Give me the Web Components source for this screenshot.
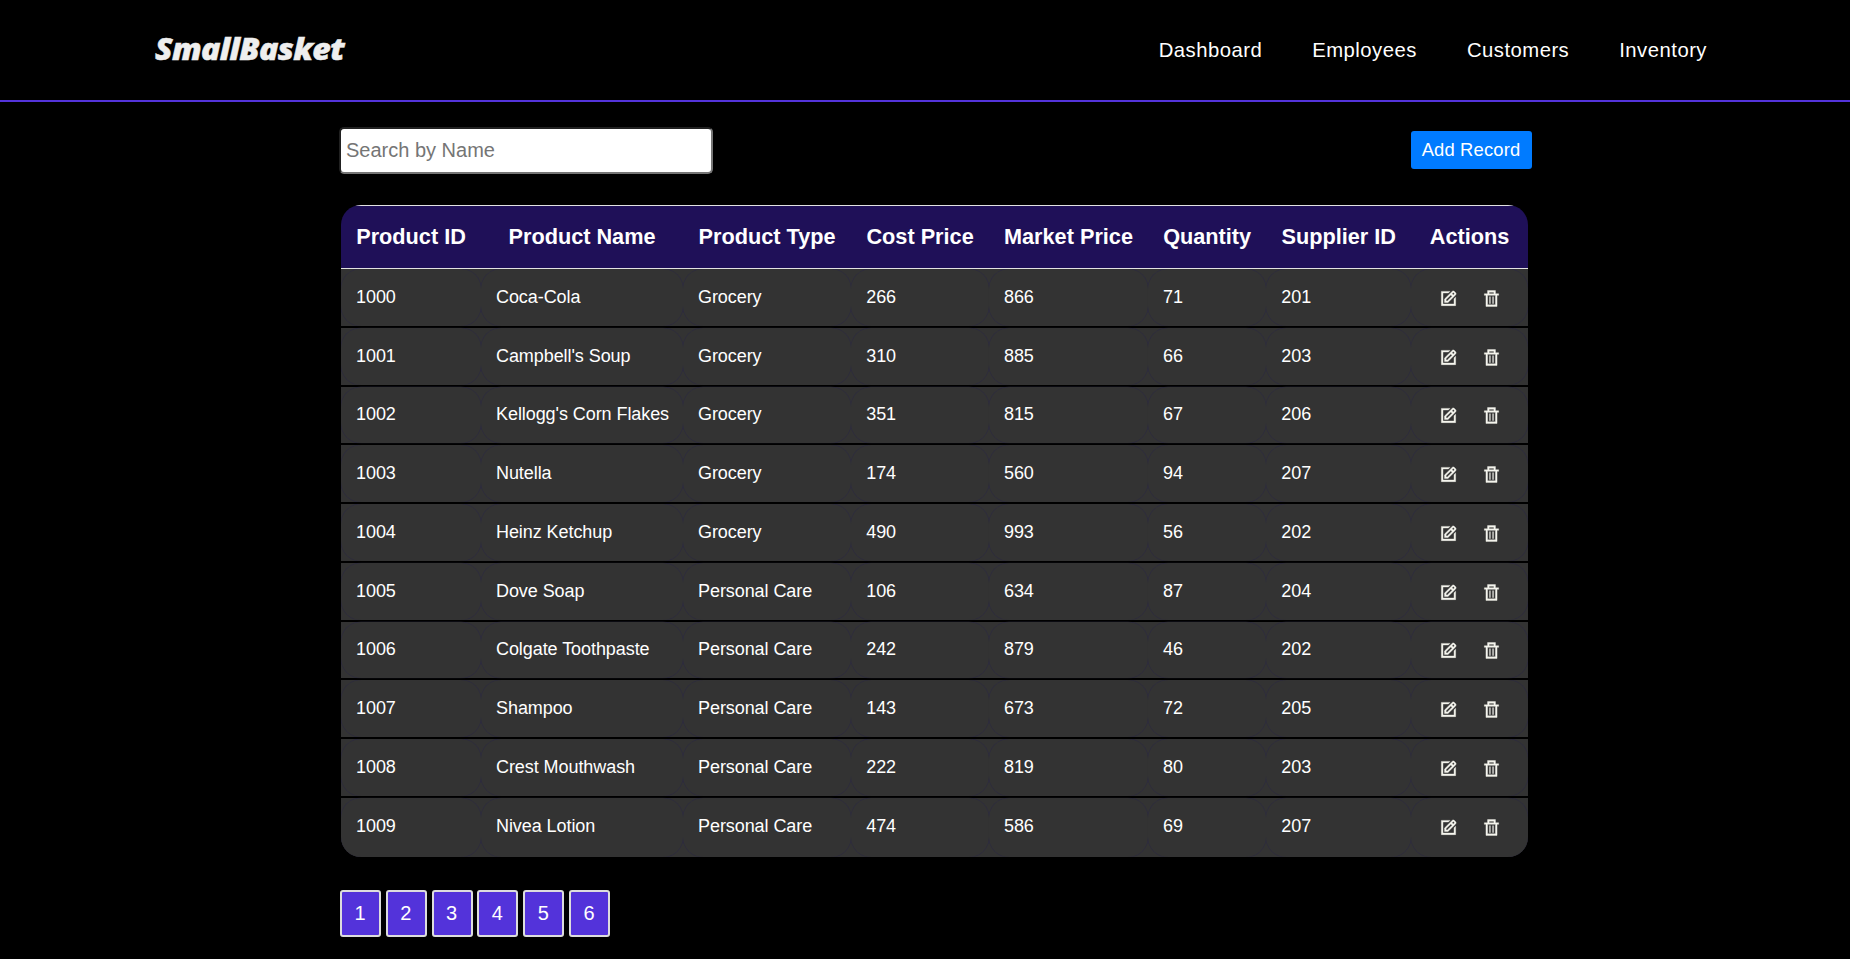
<!DOCTYPE html>
<html lang="en">
<head>
<meta charset="utf-8">
<title>SmallBasket</title>
<style>
html, body { margin: 0; background: #000; color: #fff; font-family: "Liberation Sans", Arial, sans-serif; }
body { height: 959px; overflow: hidden; }
</style>
</head>
<body>
<app-header>
  <nav-link>Dashboard</nav-link>
  <nav-link>Employees</nav-link>
  <nav-link>Customers</nav-link>
  <nav-link>Inventory</nav-link>
</app-header>
<inventory-page></inventory-page>

<script>
const define = (name, html, setup) => customElements.define(name, class extends HTMLElement {
  constructor() {
    super();
    const t = document.createElement('template');
    t.innerHTML = html;
    this.attachShadow({ mode: 'open' }).append(t.content.cloneNode(true));
  }
  connectedCallback() { if (setup) setup(this, this.shadowRoot); }
});

define('nav-link', `
<style>
:host { display: block; }
a { color: #fff; text-decoration: none; font-size: 20.3px; line-height: 24px; letter-spacing: .48px; white-space: nowrap; }
</style><a><slot></slot></a>`);

define('app-header', `
<style>
:host { display: flex; justify-content: space-between; box-sizing: border-box; height: 102px; padding: 0 143px 0 155px; border-bottom: 2px solid #5333da; }
.logo { height: 40px; margin-top: 28px; font: italic 800 30.5px/40px "Open Sans", sans-serif; letter-spacing: -.6px; color: #eee; -webkit-text-stroke: .5px #eee; transform: scaleX(1.05); transform-origin: 0 50%; }
nav { display: flex; gap: 50px; padding-top: 38px; }
</style>
<div class="logo">SmallBasket</div>
<nav><slot></slot></nav>`);

define('search-field', `
<style>
:host { display: block; }
input { display: block; box-sizing: border-box; width: 374px; height: 47px; margin: 0; padding: 2px 5px; border: 2px inset #767676; border-radius: 5px; background: #fff; font: 20px "Liberation Sans", Arial, sans-serif; outline: 0; }
input::placeholder { color: #757575; }
</style><input placeholder="Search by Name">`);

define('add-button', `
<style>
:host { display: block; margin-top: -2px; }
button { display: block; width: 121px; height: 38px; padding: 0 1px 0 0; border: 0; border-radius: 3px; background: #007bff; color: #fff; font: 18.4px "Liberation Sans", Arial, sans-serif; letter-spacing: .15px; }
</style><button><slot></slot></button>`);

define('row-actions', `
<style>
:host { display: flex; gap: 24px; padding: 2px 0 0 12.3px; }
svg { display: block; width: 19px; height: 19px; fill: #f5f5ee; stroke: #f5f5ee; stroke-width: .5; }
</style>
<svg viewBox="0 0 24 24"><path d="m7 17.013 4.413-.015 9.632-9.54c.378-.378.586-.88.586-1.414s-.208-1.036-.586-1.414l-1.586-1.586c-.756-.756-2.075-.752-2.825-.003L7 12.583v4.43zM18.045 4.458l1.589 1.583-1.597 1.582-1.586-1.585 1.594-1.58zM9 13.417l6.03-5.973 1.586 1.586-6.029 5.971L9 15.006v-1.589z"/><path d="M3 21h18V10.332l-2 2V19H5V5h6.847l2-2H3z"/></svg>
<svg viewBox="0 0 24 24"><path d="M5 22h14V8h2V6h-4V2H7v4H3v2h2zM9 4h6v2H9zM17 8v12H7V8z"/><path stroke="none" d="M9.3 9.5h1.5v9H9.3zm3.9 0h1.5v9h-1.5z"/></svg>`);

const products = [
  [1000, 'Coca-Cola', 'Grocery', 266, 866, 71, 201],
  [1001, "Campbell's Soup", 'Grocery', 310, 885, 66, 203],
  [1002, "Kellogg's Corn Flakes", 'Grocery', 351, 815, 67, 206],
  [1003, 'Nutella', 'Grocery', 174, 560, 94, 207],
  [1004, 'Heinz Ketchup', 'Grocery', 490, 993, 56, 202],
  [1005, 'Dove Soap', 'Personal Care', 106, 634, 87, 204],
  [1006, 'Colgate Toothpaste', 'Personal Care', 242, 879, 46, 202],
  [1007, 'Shampoo', 'Personal Care', 143, 673, 72, 205],
  [1008, 'Crest Mouthwash', 'Personal Care', 222, 819, 80, 203],
  [1009, 'Nivea Lotion', 'Personal Care', 474, 586, 69, 207]
];

define('product-table', `
<style>
:host { display: block; width: 1187px; border-radius: 20px; overflow: hidden; }
.row { display: grid; grid-template-columns: 140px 202px 168.2px 137.8px 159px 118.3px 145px 116.7px; }
.head { box-sizing: border-box; height: 64px; border-top: 1px solid #e2e2e2; border-bottom: 1px solid #e2e2e2; background: #1f1058; font-weight: 700; font-size: 21.7px; line-height: 62px; text-align: center; white-space: nowrap; }
.body { box-sizing: border-box; height: 58.75px; border-bottom: 2px solid #000; background: #2e2d37; font-size: 18px; letter-spacing: -.07px; }
.body:last-child { border-bottom: 0; height: 59px; }
.body:last-child .cell { padding-bottom: 2px; }
.cell { position: relative; display: flex; align-items: center; padding: 0 15px; background: #333; white-space: nowrap; }
.cell::after { content: ""; position: absolute; inset: 0; border-radius: 20px; box-shadow: 0 0 0 .5px #2b2843; clip-path: inset(0); pointer-events: none; }
</style><div id="t"></div>`, (el, root) => {
  const heads = ['Product ID', 'Product Name', 'Product Type', 'Cost Price', 'Market Price', 'Quantity', 'Supplier ID', 'Actions'];
  root.getElementById('t').innerHTML =
    `<div class="row head">${heads.map(h => `<div>${h}</div>`).join('')}</div>` +
    products.map(p => `<div class="row body">${p.map(c => `<div class="cell"><span>${c}</span></div>`).join('')}<div class="cell"><row-actions></row-actions></div></div>`).join('');
});

define('page-list', `
<style>
:host { display: flex; gap: 4.8px; }
button { box-sizing: border-box; width: 41px; height: 47px; padding: 0 1px 0 0; border: 2px solid #ddd; border-radius: 3px; background: #5333da; color: #fff; font: 20px "Liberation Sans", Arial, sans-serif; }
</style>${[1, 2, 3, 4, 5, 6].map(n => `<button>${n}</button>`).join('')}`);

define('inventory-page', `
<style>
:host { display: block; width: 1193px; margin-left: 339px; padding-top: 25px; }
.bar { display: flex; justify-content: space-between; align-items: center; height: 47px; }
product-table { margin: 31px 0 0 2px; }
page-list { margin: 33px 0 0 1px; }
</style>
<div class="bar"><search-field></search-field><add-button>Add Record</add-button></div>
<product-table></product-table>
<page-list></page-list>`);
</script>
</body>
</html>
